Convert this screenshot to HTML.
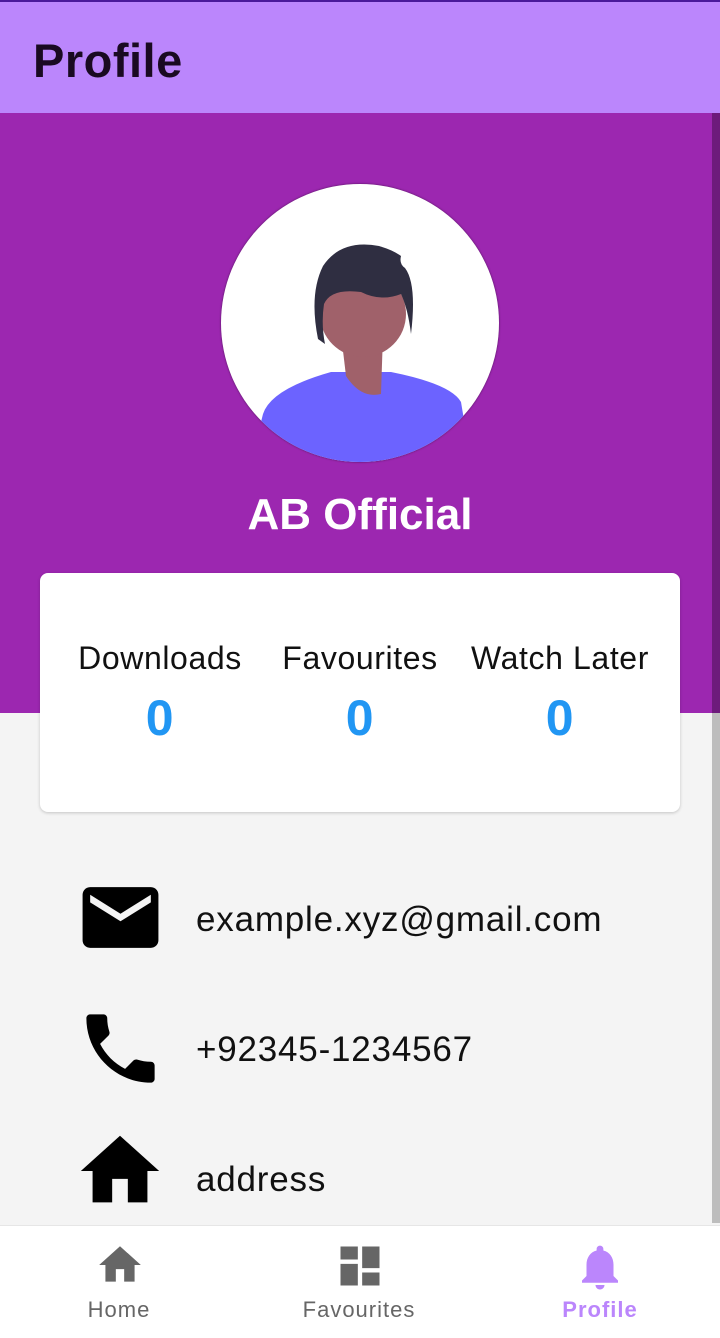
<!DOCTYPE html>
<html><head><meta charset="utf-8"><style>
*{margin:0;padding:0;box-sizing:border-box}
body{width:720px;height:1338px;overflow:hidden;background:#f4f4f4;font-family:"Liberation Sans",Roboto,sans-serif;position:relative}
.hdr{position:absolute;left:0;top:0;width:720px;height:113px;background:#bb86fc;border-top:2px solid #4a1a9a}
.hdr h1{position:absolute;left:33px;top:31px;font-size:47px;font-weight:bold;color:#1a0a22;letter-spacing:0.5px}
.purple{position:absolute;left:0;top:113px;width:720px;height:600px;background:#9c27b0}
.scroll{position:absolute;left:712px;top:113px;width:8px;height:1110px;background:#bdbdbd}
.scroll2{position:absolute;left:712px;top:113px;width:8px;height:600px;background:#6d1b7b}
.av{position:absolute;left:221px;top:184px;width:278px;height:278px;border-radius:50%;background:#fff;overflow:hidden;box-shadow:0 0 2px rgba(0,0,0,.5)}
.name{position:absolute;left:0;width:720px;top:490px;text-align:center;color:#fff;font-weight:bold;font-size:44px}
.card{position:absolute;left:40px;top:573px;width:640px;height:239px;background:#fff;border-radius:8px;box-shadow:0 1px 3px rgba(0,0,0,.2)}
.col{position:absolute;top:67px;text-align:center;font-size:32px;color:#111;letter-spacing:0.6px}
.col b{display:block;color:#2196f3;font-size:50px;margin-top:12px}
.row{position:absolute;left:196px;font-size:35px;color:#111;letter-spacing:0.8px}
.nav{position:absolute;left:0;top:1225px;width:720px;height:113px;background:#fff;border-top:1px solid #e6e6e6}
.ni{position:absolute;top:71px;font-size:22px;color:#666;text-align:center;width:200px;letter-spacing:1px}
</style></head><body>
<div class="hdr"><h1>Profile</h1></div>
<div class="purple"></div>
<div class="scroll"></div><div class="scroll2"></div>
<div class="av"><svg width="278" height="278" viewBox="0 0 278 278">
<path d="M42 230 Q50 205 110 188 L170 188 Q230 200 240 218 L250 278 L30 278Z" fill="#6c63ff"/>
<path d="M120 150 L125 192 Q140 215 160 210 L162 150Z" fill="#a0616a"/>
<circle cx="142" cy="130" r="43" fill="#a0616a"/>
<path d="M97 155 Q88 110 102 82 Q120 55 158 62 Q172 66 180 72 Q178 80 184 84 Q196 100 190 150 Q187 125 180 110 Q160 118 140 108 Q110 104 103 120 Q100 140 104 160Z" fill="#2f2e41"/>
</svg></div>
<div class="name">AB Official</div>
<div class="card">
<div class="col" style="left:20px;width:200px">Downloads<b>0</b></div>
<div class="col" style="left:220px;width:200px">Favourites<b>0</b></div>
<div class="col" style="left:420px;width:200px">Watch Later<b>0</b></div>
</div>
<svg style="position:absolute;left:75px;top:872px" width="91" height="91" viewBox="0 0 24 24"><path d="M20 4H4c-1.1 0-2 .9-2 2v12c0 1.1.9 2 2 2h16c1.1 0 2-.9 2-2V6c0-1.1-.9-2-2-2zm0 4l-8 5-8-5V6l8 5 8-5v2z" fill="#000"/></svg>
<div class="row" style="top:900px">example.xyz@gmail.com</div>
<svg style="position:absolute;left:75px;top:1003px" width="91" height="91" viewBox="0 0 24 24"><path d="M6.62 10.79c1.44 2.83 3.76 5.14 6.59 6.59l2.2-2.2c.27-.27.67-.36 1.02-.24 1.12.37 2.33.57 3.57.57.55 0 1 .45 1 1V20c0 .55-.45 1-1 1-9.39 0-17-7.61-17-17 0-.55.45-1 1-1h3.5c.55 0 1 .45 1 1 0 1.25.2 2.45.57 3.57.11.35.03.74-.25 1.02l-2.2 2.2z" fill="#000"/></svg>
<div class="row" style="top:1030px">+92345-1234567</div>
<svg style="position:absolute;left:73px;top:1124px" width="94" height="94" viewBox="0 0 24 24"><path d="M10 20v-6h4v6h5v-8h3L12 3 2 12h3v8z" fill="#000"/></svg>
<div class="row" style="top:1160px">address</div>
<div class="nav">
<svg style="position:absolute;left:95px;top:14px" width="50" height="50" viewBox="0 0 24 24"><path d="M10 20v-6h4v6h5v-8h3L12 3 2 12h3v8z" fill="#666"/></svg>
<div class="ni" style="left:19px">Home</div>
<svg style="position:absolute;left:334px;top:14px" width="52" height="52" viewBox="0 0 24 24"><path d="M3 13h8V3H3v10zm0 8h8v-6H3v6zm10 0h8V11h-8v10zm0-18v6h8V3h-8z" fill="#666" transform="translate(24 0) scale(-1 1)"/></svg>
<div class="ni" style="left:259px">Favourites</div>
<svg style="position:absolute;left:573px;top:14px" width="54" height="54" viewBox="0 0 24 24"><path d="M12 22c1.1 0 2-.9 2-2h-4c0 1.1.89 2 2 2zm6-6v-5c0-3.07-1.64-5.64-4.5-6.32V4c0-.83-.67-1.5-1.5-1.5s-1.5.67-1.5 1.5v.68C7.63 5.36 6 7.92 6 11v5l-2 2v1h16v-1l-2-2z" fill="#bb86fc"/></svg>
<div class="ni" style="left:500px;color:#bb86fc;font-weight:bold">Profile</div>
</div>
</body></html>
